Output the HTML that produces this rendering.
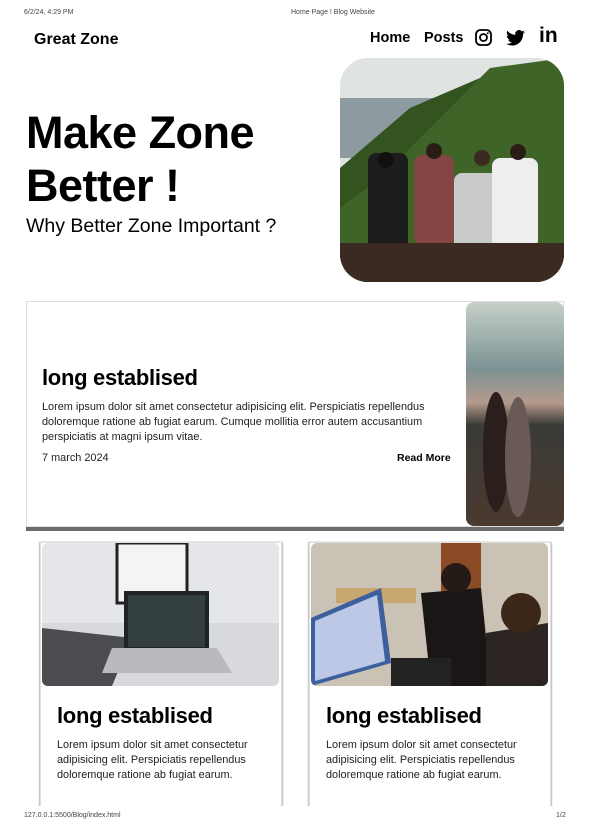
<!DOCTYPE html>
<html><head><meta charset="utf-8"><style>
*{margin:0;padding:0;box-sizing:border-box}
body{width:590px;height:830px;background:#fff;font-family:"Liberation Sans",sans-serif;color:#000;position:relative;overflow:hidden}
.a{position:absolute}
.small{font-size:7px;color:#444}
.ttl{font-weight:bold;font-size:22px;letter-spacing:-0.3px}
.p{font-size:10.9px;line-height:15px;color:#222}
</style></head><body>
<div class="a small" style="left:24px;top:9px">6/2/24, 4:29 PM</div>
<div class="a small" style="left:291px;top:9px">Home Page ! Blog Website</div>
<div class="a" style="left:34px;top:31px;font-size:16px;font-weight:bold">Great Zone</div>
<div class="a" style="left:370px;top:30px;font-size:14.5px;font-weight:bold">Home</div>
<div class="a" style="left:424px;top:30px;font-size:14.5px;font-weight:bold">Posts</div>
<svg class="a" style="left:475px;top:29px" width="17" height="17" viewBox="0 0 17 17"><rect x="1" y="1" width="15" height="15" rx="4.5" fill="none" stroke="#000" stroke-width="1.8"/><circle cx="8.5" cy="8.5" r="3.5" fill="none" stroke="#000" stroke-width="1.8"/><circle cx="12.8" cy="4.2" r="1" fill="#000"/></svg>
<svg class="a" style="left:506px;top:30px" width="19" height="16" viewBox="0 0 24 20"><path d="M24 2.4a9.8 9.8 0 0 1-2.8.8A4.9 4.9 0 0 0 23.3.4a9.9 9.9 0 0 1-3.1 1.2A4.9 4.9 0 0 0 11.8 6 14 14 0 0 1 1.7.9a4.9 4.9 0 0 0 1.5 6.6A4.9 4.9 0 0 1 1 6.9a4.9 4.9 0 0 0 3.9 4.9 4.9 4.9 0 0 1-2.2.1 4.9 4.9 0 0 0 4.6 3.4A9.9 9.9 0 0 1 0 17.3 14 14 0 0 0 7.5 19.5c9.1 0 14-7.5 14-14v-.6A10 10 0 0 0 24 2.4z" fill="#000"/></svg>
<div class="a" style="left:539px;top:24px;font-size:21px;font-weight:bold">in</div>

<div class="a" style="left:26px;top:106px;font-size:45px;font-weight:bold;line-height:53px;letter-spacing:-0.5px">Make Zone<br>Better !</div>
<div class="a" style="left:26px;top:215px;font-size:19.5px">Why Better Zone Important ?</div>

<svg class="a" style="left:340px;top:58px" width="224" height="224" viewBox="0 0 224 224">
<defs><clipPath id="c1"><rect width="224" height="224" rx="28"/></clipPath></defs>
<g clip-path="url(#c1)">
<rect width="224" height="224" fill="#dfe3e2"/>
<rect y="40" width="224" height="60" fill="#8d9aa0"/>
<path d="M0 110 L70 50 L140 20 L224 0 L224 224 L0 224Z" fill="#33531f"/>
<path d="M0 150 L40 120 L90 70 L150 10 L224 0 L224 224 L0 224Z" fill="#3f6428"/>
<rect x="28" y="95" width="40" height="100" rx="8" fill="#1d1d1d"/>
<rect x="74" y="97" width="40" height="90" rx="8" fill="#844545"/>
<rect x="114" y="115" width="46" height="80" rx="8" fill="#c9cacc"/>
<rect x="152" y="100" width="46" height="90" rx="8" fill="#eeeeee"/>
<circle cx="46" cy="102" r="8" fill="#111"/><circle cx="94" cy="93" r="8" fill="#2a1d15"/><circle cx="142" cy="100" r="8" fill="#3a2a1f"/><circle cx="178" cy="94" r="8" fill="#2a1d15"/>
<rect y="185" width="224" height="40" fill="#3a2a22"/>
</g></svg>

<div class="a" style="left:26px;top:301px;width:538px;height:226px;border:1px solid #ddd;box-shadow:0 4px 0 #6b6b6b"></div>
<div class="a ttl" style="left:42px;top:365px">long establised</div>
<div class="a p" style="left:42px;top:400px;width:415px">Lorem ipsum dolor sit amet consectetur adipisicing elit. Perspiciatis repellendus doloremque ratione ab fugiat earum. Cumque mollitia error autem accusantium perspiciatis at magni ipsum vitae.</div>
<div class="a p" style="left:42px;top:451px">7 march 2024</div>
<div class="a" style="left:397px;top:452px;font-size:10.5px;font-weight:bold">Read More</div>
<svg class="a" style="left:466px;top:302px" width="98" height="224" viewBox="0 0 98 224">
<defs><linearGradient id="g2" x1="0" y1="0" x2="0" y2="1"><stop offset="0" stop-color="#c6d0c7"/><stop offset=".3" stop-color="#7c9294"/><stop offset=".45" stop-color="#b49a8c"/><stop offset=".55" stop-color="#3a3a36"/><stop offset="1" stop-color="#4a3a30"/></linearGradient><clipPath id="c2"><rect width="98" height="224" rx="8"/></clipPath></defs>
<g clip-path="url(#c2)"><rect width="98" height="224" fill="url(#g2)"/>
<ellipse cx="30" cy="150" rx="13" ry="60" fill="#2a1f1c"/><ellipse cx="52" cy="155" rx="13" ry="60" fill="#6a5a55"/></g></svg>

<div class="a" style="left:40px;top:542px;width:242px;height:270px;border:1px solid #e0e0e0;box-shadow:1px 0 1px #bbb,-1px 0 1px #bbb"></div>
<svg class="a" style="left:42px;top:543px" width="237" height="143"><defs><clipPath id="c3"><rect width="237" height="143" rx="6"/></clipPath></defs><g clip-path="url(#c3)">
<rect width="237" height="143" fill="#e4e6ea"/><rect x="75" y="0" width="70" height="60" fill="#f4f4f4" stroke="#222" stroke-width="3"/>
<rect x="0" y="80" width="237" height="63" fill="#d8d9dc"/><path d="M0 85 L90 95 L70 143 L0 143Z" fill="#4a4c50"/>
<rect x="82" y="48" width="85" height="62" fill="#1f2326"/><rect x="86" y="52" width="77" height="52" fill="#344040"/>
<path d="M70 105 L175 105 L190 130 L60 130Z" fill="#b8babd"/></g></svg>
<div class="a ttl" style="left:57px;top:703px">long establised</div>
<div class="a p" style="left:57px;top:738px;width:215px">Lorem ipsum dolor sit amet consectetur adipisicing elit. Perspiciatis repellendus doloremque ratione ab fugiat earum.</div>

<div class="a" style="left:309px;top:542px;width:242px;height:270px;border:1px solid #e0e0e0;box-shadow:1px 0 1px #bbb,-1px 0 1px #bbb"></div>
<svg class="a" style="left:311px;top:543px" width="237" height="143"><defs><clipPath id="c4"><rect width="237" height="143" rx="6"/></clipPath></defs><g clip-path="url(#c4)">
<rect width="237" height="143" fill="#c9c2b5"/><rect x="130" y="0" width="40" height="70" fill="#8a4a25"/>
<rect x="25" y="45" width="80" height="15" fill="#c8a670"/>
<path d="M0 75 L70 45 L80 120 L0 143Z" fill="#3e5f9e"/><path d="M4 78 L66 52 L74 118 L4 138Z" fill="#bcc8e6"/>
<path d="M110 50 L170 45 L180 143 L120 143Z" fill="#1a1616"/><circle cx="145" cy="35" r="15" fill="#241a16"/>
<path d="M175 90 L237 80 L237 143 L175 143Z" fill="#2b2420"/><circle cx="210" cy="70" r="20" fill="#3b2618"/>
<rect x="80" y="115" width="60" height="28" fill="#222"/></g></svg>
<div class="a ttl" style="left:326px;top:703px">long establised</div>
<div class="a p" style="left:326px;top:738px;width:215px">Lorem ipsum dolor sit amet consectetur adipisicing elit. Perspiciatis repellendus doloremque ratione ab fugiat earum.</div>

<div class="a" style="left:0;top:806px;width:590px;height:24px;background:#fff"></div>
<div class="a small" style="left:24px;top:812px">127.0.0.1:5500/Blog/index.html</div>
<div class="a small" style="left:556px;top:812px">1/2</div>
</body></html>
